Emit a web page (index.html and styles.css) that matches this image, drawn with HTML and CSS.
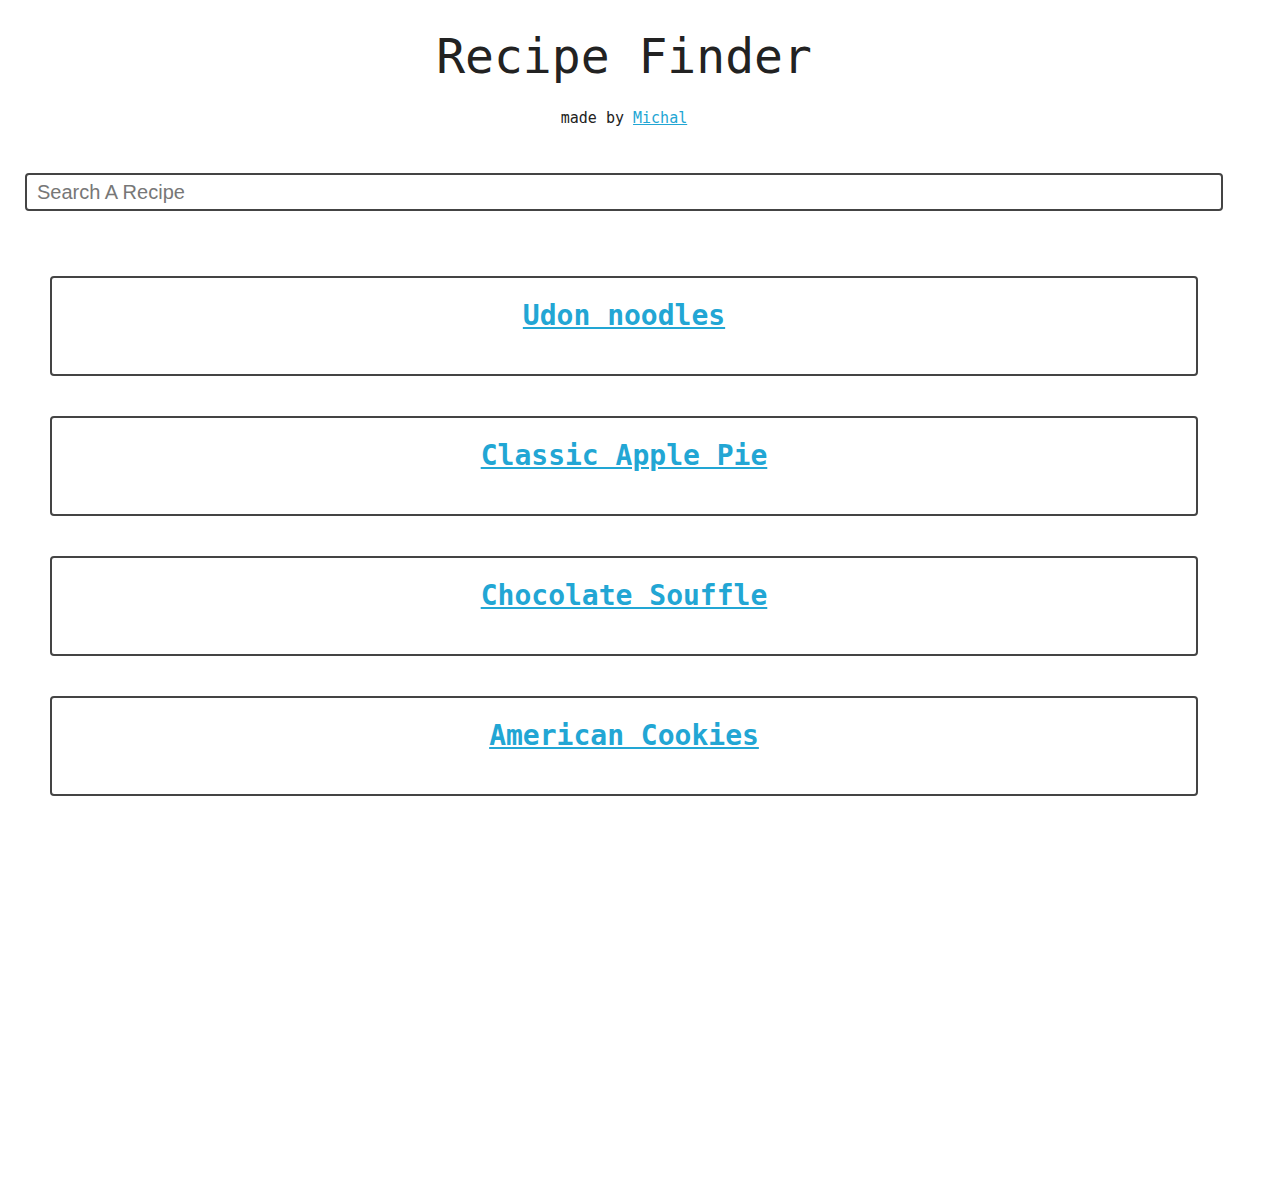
FILE: index.html
```html
<!DOCTYPE html>
<html lang="en">
<head>
<meta charset="utf-8">
<title>Recipe Finder</title>
<link rel="stylesheet" href="styles.css">
</head>
<body>
<div class="page">
  <header class="header">
    <h1 class="title">Recipe Finder</h1>
    <p class="byline">made by <a href="#" class="link">Michal</a></p>
  </header>
  <div class="search">
    <input class="search-input" type="text" placeholder="Search A Recipe">
  </div>
  <ul class="recipes">
    <li class="card"><a href="#" class="card-link">Udon noodles</a></li>
    <li class="card"><a href="#" class="card-link">Classic Apple Pie</a></li>
    <li class="card"><a href="#" class="card-link">Chocolate Souffle</a></li>
    <li class="card"><a href="#" class="card-link">American Cookies</a></li>
  </ul>
</div>
</body>
</html>
```

FILE: styles.css
```css
html, body {
  margin: 0;
  padding: 0;
  background: #ffffff;
}
body {
  font-family: "DejaVu Sans Mono", monospace;
  color: #222222;
}
.page {
  width: 1248px;
  box-sizing: border-box;
  padding: 0 25px;
}
.header {
  text-align: center;
  padding-top: 28px;
}
.title {
  margin: 0;
  font-size: 48px;
  font-weight: normal;
  line-height: 56px;
  color: #222222;
}
.byline {
  margin: 25px 0 0;
  font-size: 15px;
  line-height: 18px;
  color: #222222;
}
.link {
  color: #22a6d4;
  text-decoration: underline;
}
.search {
  margin-top: 46px;
}
.search-input {
  display: block;
  width: 100%;
  box-sizing: border-box;
  height: 38px;
  margin: 0;
  padding: 0 10px;
  border: 2px solid #444444;
  border-radius: 4px;
  font-family: "Liberation Sans", Arial, sans-serif;
  font-size: 20px;
  color: #222222;
  outline: none;
}
.search-input::placeholder {
  color: #777777;
}
.recipes {
  list-style: none;
  margin: 65px 0 0;
  padding: 0 25px;
  display: flex;
  flex-direction: column;
  gap: 40px;
}
.card {
  box-sizing: border-box;
  height: 100px;
  border: 2px solid #444444;
  border-radius: 4px;
  text-align: center;
  padding-top: 21px;
}
.card-link {
  font-size: 28px;
  font-weight: bold;
  line-height: 33px;
  color: #22a6d4;
  text-decoration: underline;
}
```
